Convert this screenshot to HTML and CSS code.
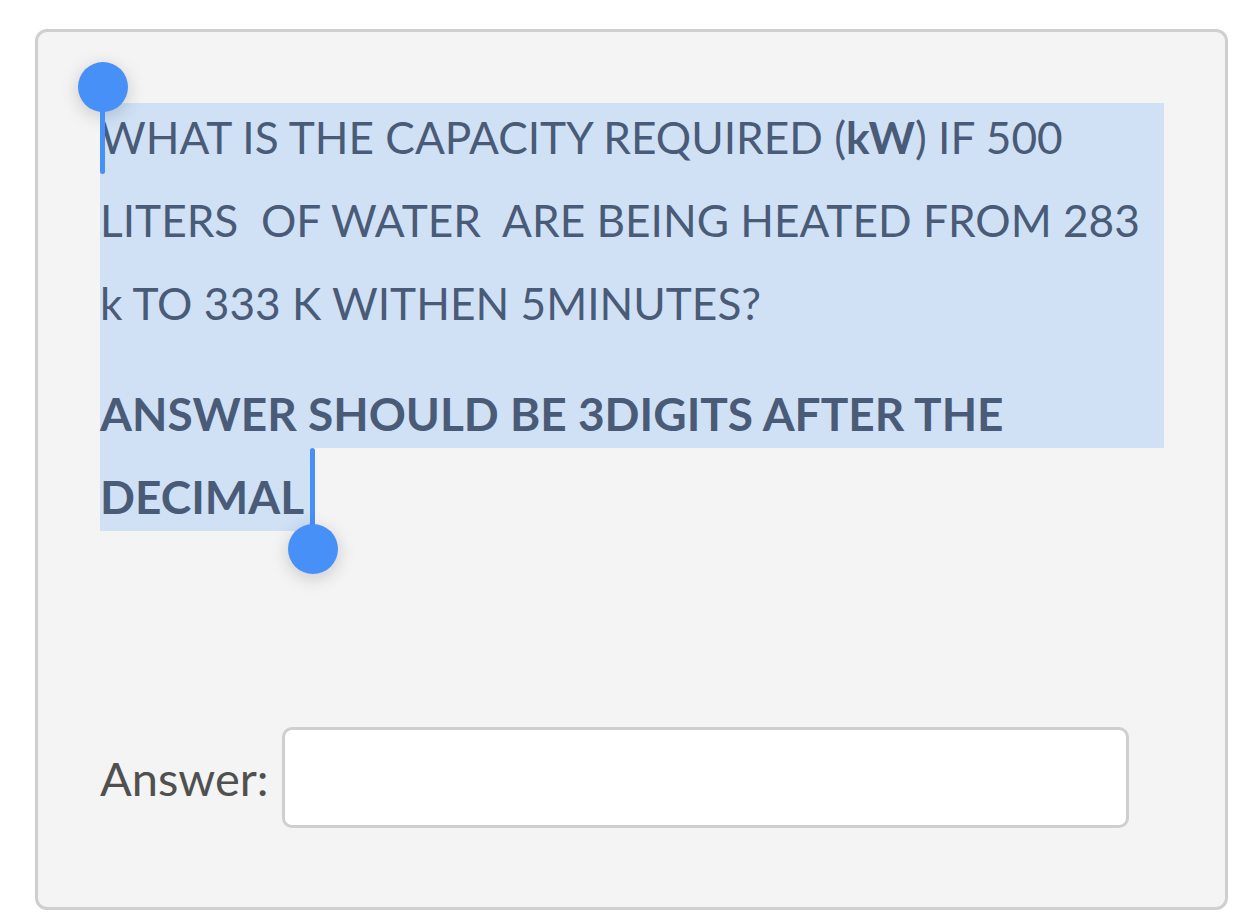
FILE: index.html
```html
<!DOCTYPE html>
<html>
<head>
<meta charset="utf-8">
<link rel="stylesheet" href="styles.css">
</head>
<body>
<div class="page">
  <div class="card">
    <div class="question">
      <div class="hl">
        <p class="q-text"><span class="nudge-up">WHAT IS THE CAPACITY REQUIRED (<b>kW</b>) IF 500<br>LITERS&nbsp; OF WATER&nbsp; ARE BEING HEATED FROM 283<br>k TO 333 K WITHEN 5MINUTES?</span></p>
        <p class="q-bold"><span class="nudge-down">ANSWER SHOULD BE 3DIGITS AFTER THE</span></p>
      </div>
      <p class="q-bold tail-line"><span class="tail"><span class="nudge-down">DECIMAL</span></span></p>
      <div class="handle handle-start">
        <span class="knob"></span><span class="stem"></span>
      </div>
      <div class="handle handle-end">
        <span class="stem"></span><span class="knob"></span>
      </div>
    </div>
    <div class="answer-row">
      <label class="answer-label" for="ans">Answer:</label>
      <input id="ans" class="answer-input" type="text">
    </div>
  </div>
</div>
</body>
</html>
```
FILE: styles.css
```css
html, body {
  margin: 0;
  padding: 0;
  background: #ffffff;
}
.page {
  padding: 29px 32px 13px 35px;
}
.card {
  box-sizing: border-box;
  height: 881px;
  border: 3px solid #cfcfcf;
  border-radius: 12px;
  background: #f4f4f4;
  padding: 71px 61px 0 62px;
  font-family: Lato, "Open Sans", sans-serif;
}
.question {
  position: relative;
}
.hl {
  background: #d0e1f6;
}
.q-text {
  margin: 0;
  font-size: 44.2px;
  line-height: 83px;
  color: #4a5b78;
  font-weight: 400;
  white-space: nowrap;
}
.q-text b {
  font-weight: 700;
}
.q-bold {
  margin: 13px 0 0 0;
  font-size: 46px;
  line-height: 83px;
  font-weight: 700;
  color: #4a5b78;
  white-space: nowrap;
}
.tail-line {
  margin: 0;
}
.tail {
  display: inline-block;
  background: #d0e1f6;
  padding-right: 8px;
  height: 83px;
  vertical-align: top;
}
.nudge-up {
  position: relative;
  top: -8px;
}
.nudge-down {
  position: relative;
  top: 7px;
}
.handle {
  position: absolute;
  width: 50px;
}
.knob {
  display: block;
  width: 50px;
  height: 50px;
  border-radius: 50%;
  background: #4790f8;
  box-shadow: 0 4px 18px rgba(0, 0, 0, 0.18);
}
.stem {
  display: block;
  width: 5px;
  background: #4790f8;
  border-radius: 3px;
  margin-left: 22px;
}
.handle-start {
  left: -22px;
  top: -41px;
}
.handle-start .stem {
  height: 66px;
  margin-top: -4px;
}
.handle-end {
  left: 188px;
  top: 345px;
}
.handle-end .stem {
  height: 80px;
  margin-bottom: -4px;
}
.answer-row {
  display: flex;
  align-items: center;
  gap: 13px;
  margin-top: 196px;
}
.answer-label {
  font-size: 47px;
  color: #505050;
}
.answer-input {
  box-sizing: border-box;
  width: 847px;
  height: 101px;
  border: 3px solid #cfcfcf;
  border-radius: 10px;
  background: #ffffff;
  outline: none;
  margin: 0;
}
```
